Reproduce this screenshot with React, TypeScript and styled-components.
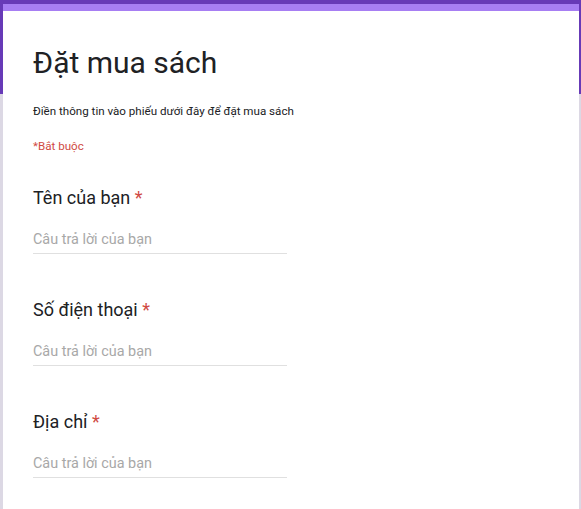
import React from 'react';
import styled, { createGlobalStyle } from 'styled-components';

const colors = {
  purple: '#673ab7',
  accent: '#a77ef3',
  pageBg: '#dcd8e4',
  text: '#202124',
  red: '#d04a43',
  placeholder: '#a8a8a8',
  line: '#e0e0e0',
};

const GlobalStyle = createGlobalStyle`
  html, body {
    margin: 0;
    padding: 0;
    background: ${colors.pageBg};
    font-family: Roboto, "Noto Sans", Arial, sans-serif;
    color: ${colors.text};
  }
  * { box-sizing: border-box; }
`;

const Page = styled.div`
  min-height: 509px;
  padding: 4px 2px 0 3px;
  background: linear-gradient(to bottom, ${colors.purple} 0, ${colors.purple} 94px, ${colors.pageBg} 94px);
`;

const Card = styled.main`
  background: #fff;
  border-top: 7px solid ${colors.accent};
  padding: 31px 30px 30px 30px;
  min-height: 505px;
`;

const Title = styled.h1`
  margin: 0;
  font-size: 30px;
  font-weight: 400;
  line-height: 42px;
  color: ${colors.text};
`;

const Description = styled.p`
  margin: 19px 0 0;
  font-size: 11.6px;
  line-height: 16px;
  color: ${colors.text};
`;

const RequiredNote = styled.div`
  margin-top: 19px;
  font-size: 11.6px;
  line-height: 16px;
  color: ${colors.red};
`;

const QuestionList = styled.div`
  display: flex;
  flex-direction: column;
  gap: 44px;
  margin-top: 32px;
`;

const Question = styled.section`
  display: flex;
  flex-direction: column;
`;

const Label = styled.label`
  font-size: 18px;
  line-height: 24px;
  color: ${colors.text};
`;

const Star = styled.span`
  color: ${colors.red};
`;

const AnswerInput = styled.input`
  margin-top: 20px;
  width: 254px;
  border: none;
  border-bottom: 1px solid ${colors.line};
  padding: 0 0 3px;
  font-family: inherit;
  font-size: 14.4px;
  line-height: 20px;
  color: ${colors.text};
  background: transparent;
  outline: none;

  &::placeholder {
    color: ${colors.placeholder};
  }
`;

const questions = ['Tên của bạn', 'Số điện thoại', 'Địa chỉ'];

export default function App() {
  return (
    <>
      <GlobalStyle />
      <Page>
        <Card>
          <Title>Đặt mua sách</Title>
          <Description>Điền thông tin vào phiếu dưới đây để đặt mua sách</Description>
          <RequiredNote>*Bắt buộc</RequiredNote>
          <QuestionList>
            {questions.map((q) => (
              <Question key={q}>
                <Label>
                  {q} <Star>*</Star>
                </Label>
                <AnswerInput placeholder="Câu trả lời của bạn" />
              </Question>
            ))}
          </QuestionList>
        </Card>
      </Page>
    </>
  );
}
